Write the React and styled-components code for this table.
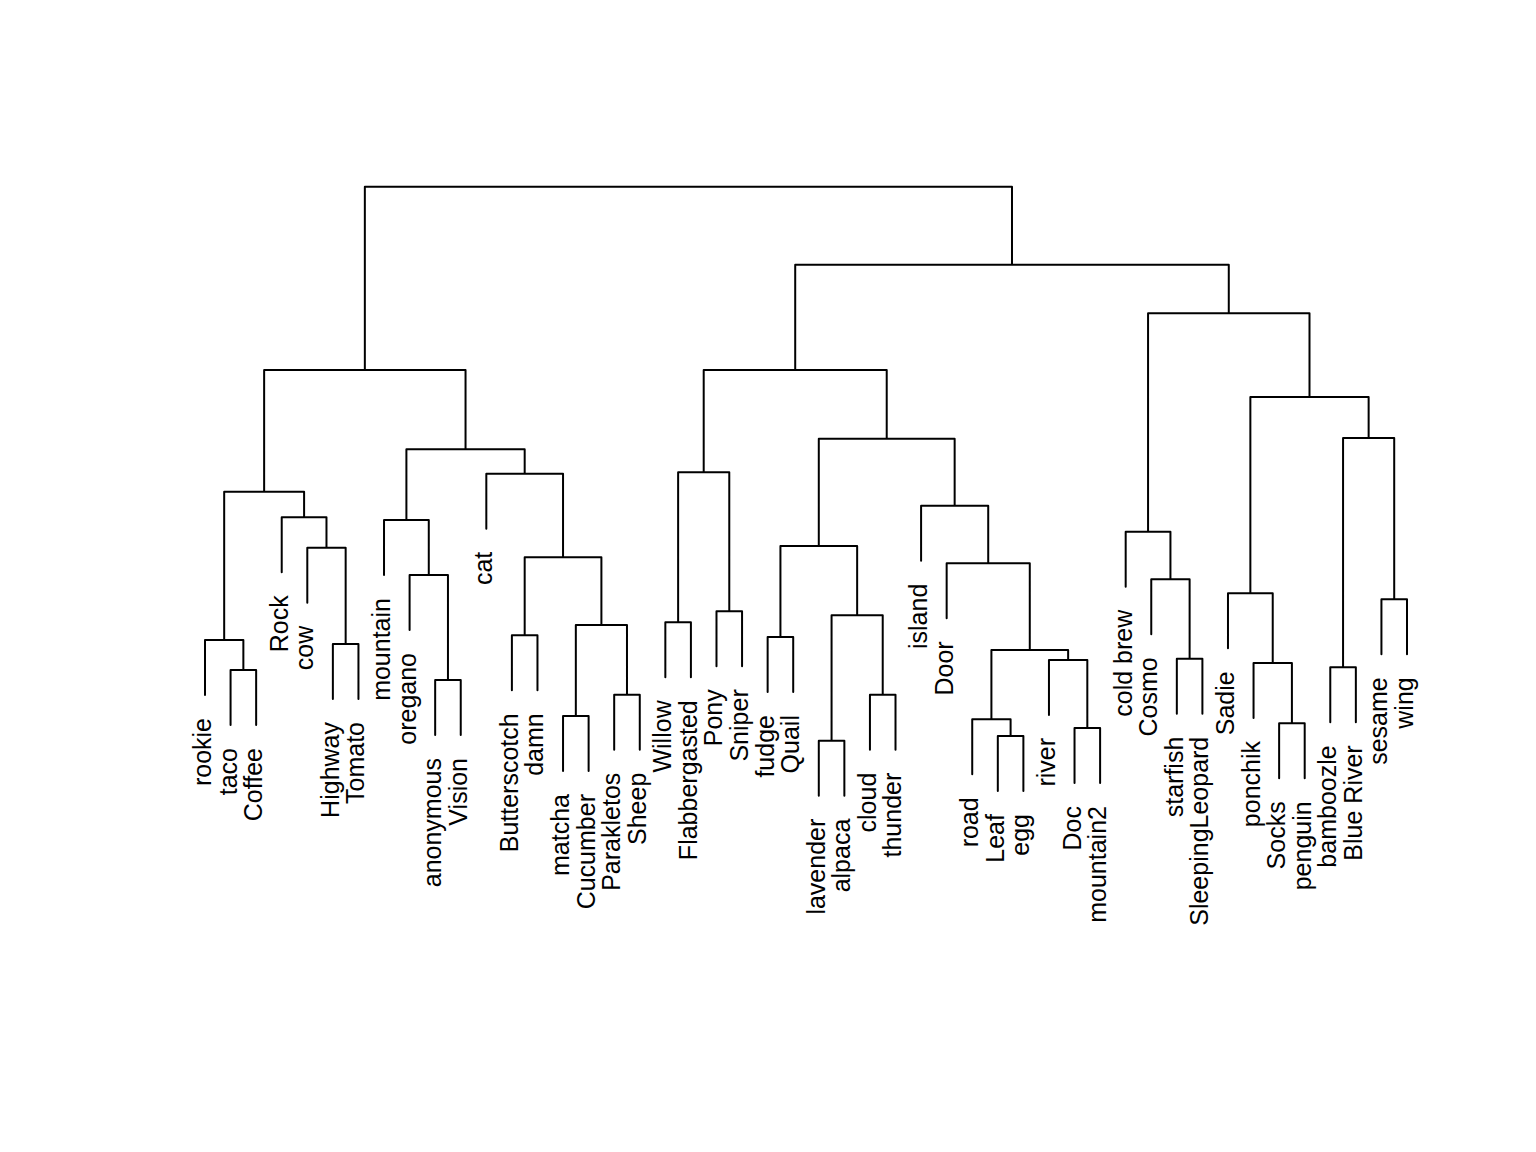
import React from "react";
import styled, { createGlobalStyle } from "styled-components";

const GlobalStyle = createGlobalStyle`
  html, body { margin: 0; padding: 0; background: #ffffff; }
  body { font-family: "Liberation Sans", Arial, sans-serif; }
`;

const Figure = styled.div`
  width: 1536px;
  height: 1152px;
  background: #ffffff;
  overflow: hidden;
`;

const Chart = styled.svg`
  display: block;
  width: 1536px;
  height: 1152px;
`;

const Branch = styled.path`
  fill: none;
  stroke: #000000;
  stroke-width: 2;
  stroke-linecap: round;
  stroke-linejoin: round;
`;

const Label = styled.text`
  font-family: "Liberation Sans", Arial, sans-serif;
  font-size: 25px;
  fill: #000000;
`;

const LEAVES = [
  "rookie", "taco", "Coffee", "Rock", "cow", "Highway", "Tomato", "mountain",
  "oregano", "anonymous", "Vision", "cat", "Butterscotch", "damn", "matcha",
  "Cucumber", "Parakletos", "Sheep", "Willow", "Flabbergasted", "Pony", "Sniper",
  "fudge", "Quail", "lavender", "alpaca", "cloud", "thunder", "island", "Door",
  "road", "Leaf", "egg", "river", "Doc", "mountain2", "cold brew", "Cosmo",
  "starfish", "SleepingLeopard", "Sadie", "ponchik", "Socks", "penguin",
  "bamboozle", "Blue River", "sesame", "wing",
];

const X0 = 205;
const DX = (1407 - 205) / 47;
const HANG = 55;
const LABEL_GAP = 23;
const BASE_OFF = 6;

const n = (a, b, y) => ({ a, b, y });

const A = n(1, n(2, 3, 670), 640);
const B = n(4, n(5, n(6, 7, 644), 547.7), 517.3);
const AB = n(A, B, 491.7);
const C = n(8, n(9, n(10, 11, 680), 575), 520);
const D = n(12, n(n(13, 14, 635.3), n(n(15, 16, 716), n(17, 18, 694.7), 625), 557.3), 473.7);
const CD = n(C, D, 449.3);
const L = n(AB, CD, 370);

const E = n(n(19, 20, 622.3), n(21, 22, 611.3), 472.3);
const F = n(n(23, 24, 637), n(n(25, 26, 740.7), n(27, 28, 694.7), 615.3), 546);
const G = n(29, n(30, n(n(31, n(32, 33, 736), 719.3), n(34, n(35, 36, 728), 660), 650), 563.3), 505.7);
const FG = n(F, G, 438.7);
const EFG = n(E, FG, 370);

const H = n(37, n(38, n(39, 40, 658.7), 579.3), 531.7);
const I = n(41, n(42, n(43, 44, 723.3), 663), 593.3);
const J = n(n(45, 46, 667.3), n(47, 48, 599.3), 438);
const IJ = n(I, J, 397);
const HIJ = n(H, IJ, 313.3);
const RR = n(EFG, HIJ, 264.7);
const ROOT = n(L, RR, 186.7);

const leafX = (i) => X0 + (i - 1) * DX;

function layout(node, parentY, segs, labels) {
  if (typeof node === "number") {
    const x = leafX(node);
    const bottom = parentY + HANG;
    segs.push(`M${x.toFixed(2)} ${parentY}V${bottom.toFixed(2)}`);
    labels.push({ x, y: bottom + LABEL_GAP, text: LEAVES[node - 1] });
    return x;
  }
  const xa = layout(node.a, node.y, segs, labels);
  const xb = layout(node.b, node.y, segs, labels);
  segs.push(`M${xa.toFixed(2)} ${node.y}H${xb.toFixed(2)}`);
  const xm = (xa + xb) / 2;
  if (parentY !== null) segs.push(`M${xm.toFixed(2)} ${parentY}V${node.y}`);
  return xm;
}

const segs = [];
const labels = [];
layout(ROOT, null, segs, labels);

export default function App() {
  return (
    <>
      <GlobalStyle />
      <Figure>
        <Chart viewBox="0 0 1536 1152" xmlns="http://www.w3.org/2000/svg">
          <Branch d={segs.join("")} />
          {labels.map((l) => {
            const bx = l.x + BASE_OFF;
            return (
              <Label
                key={l.text}
                x={bx}
                y={l.y}
                textAnchor="end"
                transform={`rotate(-90 ${bx.toFixed(2)} ${l.y.toFixed(2)})`}
              >
                {l.text}
              </Label>
            );
          })}
        </Chart>
      </Figure>
    </>
  );
}
